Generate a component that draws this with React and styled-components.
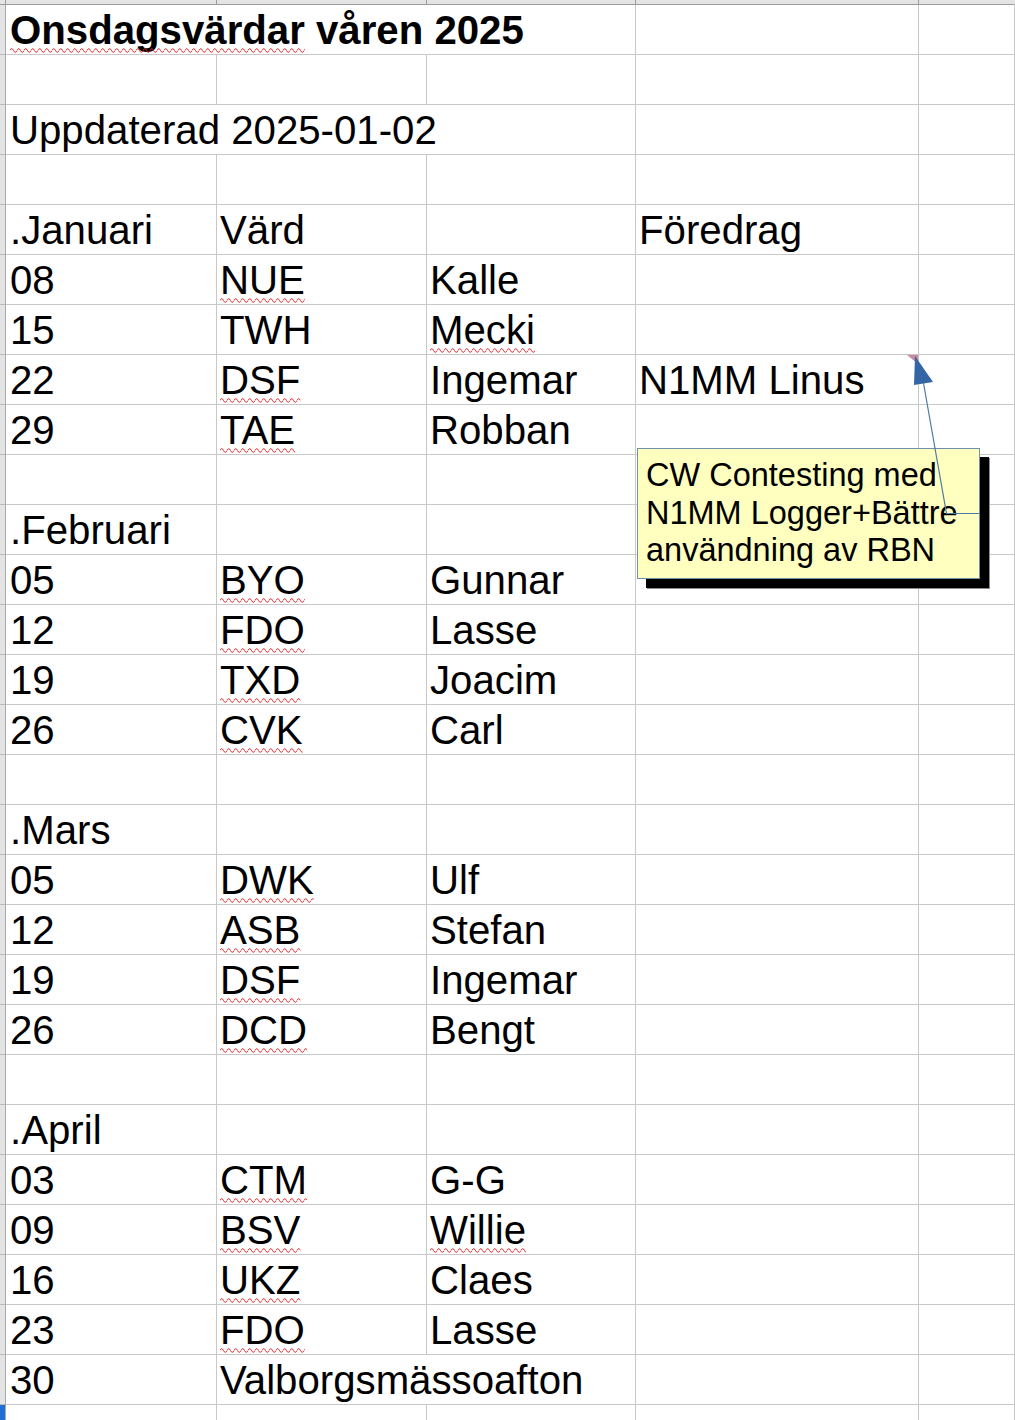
import React from "react";
import styled, { createGlobalStyle, css } from "styled-components";

const Global = createGlobalStyle`
  html, body { margin: 0; padding: 0; background: #ffffff; }
  body { overflow: hidden; }
`;

const Sheet = styled.div`
  position: relative;
  width: 1015px;
  height: 1420px;
  overflow: hidden;
  background: #ffffff;
  font-family: "Liberation Sans", Arial, sans-serif;
  color: #000000;
`;

const Grid = styled.div`
  display: grid;
  grid-template-columns: 6px 211px 210px 209px 283px 1fr;
  grid-auto-rows: 50px;
`;

const HeaderRow = styled.div`
  display: grid;
  grid-template-columns: 6px 211px 210px 209px 283px 1fr;
  height: 5px;
`;

const ColHead = styled.div`
  box-sizing: border-box;
  height: 5px;
  background: #e4e4e4;
  border-bottom: 1px solid #9c9c9c;
  border-right: 1px solid ${(p) => (p.$last ? "transparent" : "#9c9c9c")};
`;

const RowHead = styled.div`
  box-sizing: border-box;
  background: ${(p) => (p.$active ? "#1f6fd6" : "#e4e4e4")};
  border-right: 1px solid #a8a8a8;
  border-bottom: 1px solid ${(p) => (p.$active ? "#1f6fd6" : "#b8b8b8")};
`;

const Cell = styled.div`
  box-sizing: border-box;
  height: 50px;
  border-right: 1px solid #c8c8c8;
  border-bottom: 1px solid #c8c8c8;
  padding-top: 1px;
  padding-left: ${(p) => (p.$first ? "4px" : "3px")};
  font-size: 40.2px;
  line-height: 49px;
  font-weight: ${(p) => (p.$bold ? 700 : 400)};
  white-space: nowrap;
  overflow: visible;
  position: relative;
  z-index: 1;
  ${(p) =>
    p.$span &&
    css`
      grid-column: span ${p.$span};
    `}
`;

const SpellWord = styled.span`
  position: relative;
`;

const Wave = styled.svg`
  position: absolute;
  left: 0;
  top: 40px;
  width: 100%;
  height: 5px;
  overflow: visible;
`;

function Spell({ children, id }) {
  return (
    <SpellWord>
      {children}
      <Wave preserveAspectRatio="none">
        <defs>
          <pattern id={id} width="7" height="5" patternUnits="userSpaceOnUse">
            <path d="M0 2.5 Q1.75 -1.2 3.5 2.5 T7 2.5" fill="none" stroke="#e0262a" strokeWidth="1" />
          </pattern>
        </defs>
        <rect x="0" y="0" width="100%" height="5" fill={`url(#${id})`} />
      </Wave>
    </SpellWord>
  );
}

const Comment = styled.div`
  position: absolute;
  left: 637px;
  top: 448px;
  width: 343px;
  height: 131px;
  box-sizing: border-box;
  padding: 8px 8px 0 8px;
  background: #ffffc0;
  border: 1px solid #7190ad;
  box-shadow: 9px 9px 0 #000000, 10px 10px 0 #8c8c8c;
  font-size: 32.5px;
  line-height: 37.5px;
  color: #000000;
  z-index: 3;
`;

const Overlay = styled.svg`
  position: absolute;
  left: 0;
  top: 0;
  z-index: 4;
  pointer-events: none;
`;

const S = (t) => ({ t, spell: true });

const data = [
  [{ span: 3, bold: true, parts: [S("Onsdagsvärdar"), " våren 2025"] }, {}, {}],
  [{}, {}, {}, {}, {}],
  [{ span: 3, parts: ["Uppdaterad 2025-01-02"] }, {}, {}],
  [{}, {}, {}, {}, {}],
  [{ parts: [".Januari"] }, { parts: ["Värd"] }, {}, { parts: ["Föredrag"] }, {}],
  [{ parts: ["08"] }, { parts: [S("NUE")] }, { parts: ["Kalle"] }, {}, {}],
  [{ parts: ["15"] }, { parts: ["TWH"] }, { parts: [S("Mecki")] }, {}, {}],
  [{ parts: ["22"] }, { parts: [S("DSF")] }, { parts: ["Ingemar"] }, { parts: ["N1MM Linus"] }, {}],
  [{ parts: ["29"] }, { parts: [S("TAE")] }, { parts: ["Robban"] }, {}, {}],
  [{}, {}, {}, {}, {}],
  [{ parts: [".Februari"] }, {}, {}, {}, {}],
  [{ parts: ["05"] }, { parts: [S("BYO")] }, { parts: ["Gunnar"] }, {}, {}],
  [{ parts: ["12"] }, { parts: [S("FDO")] }, { parts: ["Lasse"] }, {}, {}],
  [{ parts: ["19"] }, { parts: [S("TXD")] }, { parts: ["Joacim"] }, {}, {}],
  [{ parts: ["26"] }, { parts: [S("CVK")] }, { parts: ["Carl"] }, {}, {}],
  [{}, {}, {}, {}, {}],
  [{ parts: [".Mars"] }, {}, {}, {}, {}],
  [{ parts: ["05"] }, { parts: [S("DWK")] }, { parts: ["Ulf"] }, {}, {}],
  [{ parts: ["12"] }, { parts: [S("ASB")] }, { parts: ["Stefan"] }, {}, {}],
  [{ parts: ["19"] }, { parts: [S("DSF")] }, { parts: ["Ingemar"] }, {}, {}],
  [{ parts: ["26"] }, { parts: [S("DCD")] }, { parts: ["Bengt"] }, {}, {}],
  [{}, {}, {}, {}, {}],
  [{ parts: [".April"] }, {}, {}, {}, {}],
  [{ parts: ["03"] }, { parts: [S("CTM")] }, { parts: ["G-G"] }, {}, {}],
  [{ parts: ["09"] }, { parts: [S("BSV")] }, { parts: [S("Willie")] }, {}, {}],
  [{ parts: ["16"] }, { parts: [S("UKZ")] }, { parts: ["Claes"] }, {}, {}],
  [{ parts: ["23"] }, { parts: [S("FDO")] }, { parts: ["Lasse"] }, {}, {}],
  [{ parts: ["30"] }, { span: 2, parts: ["Valborgsmässoafton"] }, {}, {}],
  [{}, {}, {}, {}, {}],
];

function renderParts(parts, key) {
  if (!parts) return null;
  return parts.map((p, i) =>
    typeof p === "string" ? (
      <React.Fragment key={i}>{p}</React.Fragment>
    ) : (
      <Spell key={i} id={`wave-${key}-${i}`}>
        {p.t}
      </Spell>
    )
  );
}

export default function App() {
  return (
    <Sheet>
      <Global />
      <HeaderRow>
        <ColHead />
        <ColHead />
        <ColHead />
        <ColHead />
        <ColHead />
        <ColHead $last />
      </HeaderRow>
      <Grid>
        {data.map((row, r) => (
          <React.Fragment key={r}>
            <RowHead $active={r === data.length - 1} />
            {row.map((c, i) => (
              <Cell key={i} $first={i === 0} $bold={c.bold} $span={c.span}>
                {renderParts(c.parts, `${r}-${i}`)}
              </Cell>
            ))}
          </React.Fragment>
        ))}
      </Grid>

      <Comment>
        CW Contesting med
        <br />
        N1MM Logger+Bättre
        <br />
        användning av RBN
      </Comment>

      <Overlay width="1015" height="1420" viewBox="0 0 1015 1420">
        <polygon points="907,355 918,355 918,364" fill="#c88aa4" />
        <polyline
          points="979.5,513.5 946.5,513.5 923.5,383"
          fill="none"
          stroke="#4f7aa6"
          strokeWidth="1.2"
        />
        <polygon points="915,356 914,385 933,382" fill="#3465a4" />
      </Overlay>
    </Sheet>
  );
}
